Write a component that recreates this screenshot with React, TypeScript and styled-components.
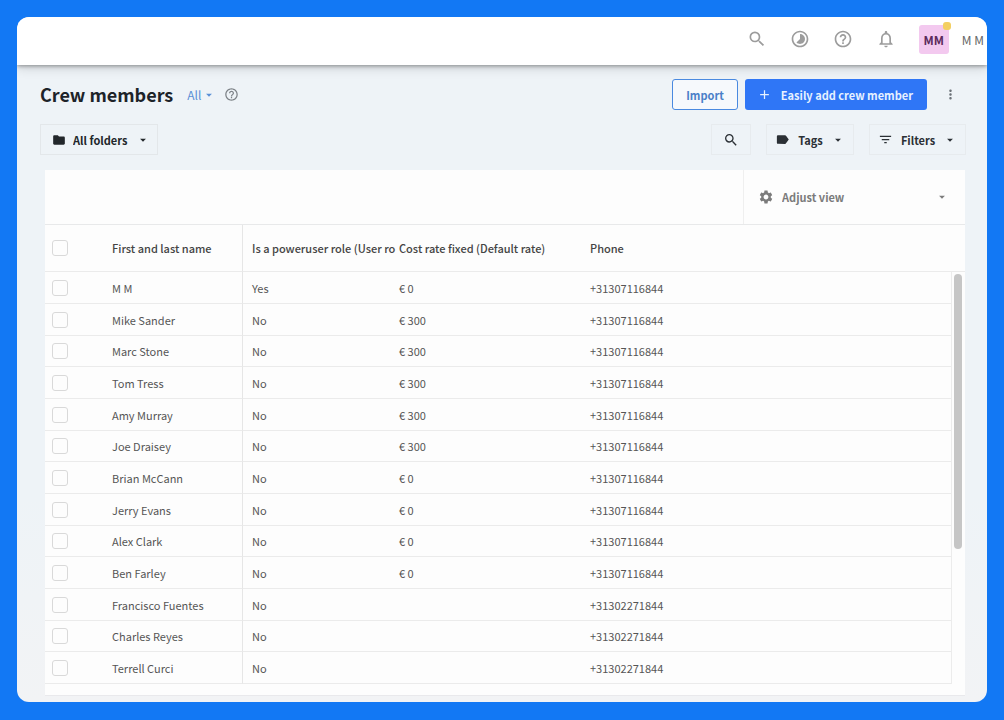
import React from "react";
import styled, { createGlobalStyle } from "styled-components";
import {
  MdAdd,
  MdArrowDropDown,
  MdFilterList,
  MdFolder,
  MdHelpOutline,
  MdLabel,
  MdMoreVert,
  MdNotificationsNone,
  MdSearch,
  MdSettings,
  MdTimelapse,
} from "react-icons/md";

const GlobalStyle = createGlobalStyle`
  * { box-sizing: border-box; }
  body { margin: 0; background: #1278f4; }
  body, button, select, input {
    font-family: "Noto Sans CJK SC", "Noto Sans", sans-serif;
  }
`;

const Backdrop = styled.div`
  display: flex;
  min-height: 100vh;
  padding: 17px 17px 18px;
  background: #1278f4;
`;

const Window = styled.div`
  flex: 1;
  min-width: 0;
  display: flex;
  flex-direction: column;
  overflow: hidden;
  border-radius: 12px;
  background: linear-gradient(#eef3f7 70%, #f2f3f5);
`;

const TopBar = styled.header`
  display: flex;
  align-items: center;
  justify-content: flex-end;
  height: 48px;
  padding: 0 3px 4px 0;
  background: #fff;
  box-shadow: 0 1px 4px rgba(0, 0, 0, 0.38), 0 4px 10px rgba(0, 0, 0, 0.12);
`;

const TopActions = styled.nav`
  display: flex;
  gap: 23px;
  margin: 0 23px 0 0;
`;

const IconButton = styled.button<{ $size: number; $color: string }>`
  display: flex;
  align-items: center;
  justify-content: center;
  width: ${(p) => p.$size}px;
  height: ${(p) => p.$size}px;
  padding: 0;
  border: 0;
  background: none;
  color: ${(p) => p.$color};
`;

const Avatar = styled.div`
  position: relative;
  width: 30px;
  height: 29px;
  border-radius: 3px;
  background: #f3c9ef;
  color: #5c2a5c;
  font-size: 12px;
  font-weight: 700;
  line-height: 29px;
  text-align: center;
`;

const StatusDot = styled.span`
  position: absolute;
  top: -3px;
  right: -2px;
  width: 8px;
  height: 8px;
  border-radius: 3px;
  background: #f3cf62;
`;

const UserName = styled.span`
  margin-left: 13px;
  color: #666;
  font-size: 12px;
  white-space: nowrap;
`;

const Page = styled.main`
  flex: 1;
  display: flex;
  flex-direction: column;
  padding: 14px 21px 6px 23px;
`;

const Bar = styled.div`
  display: flex;
  align-items: center;
  height: 31px;
  margin-bottom: 14px;
`;

const Title = styled.h1`
  margin: 0 14px 0 0;
  color: #1d2329;
  font-size: 18px;
  font-weight: 700;
  line-height: 31px;
  white-space: nowrap;
`;

const Spacer = styled.div`
  flex: 1;
`;

const Picker = styled.label<{ $color: string }>`
  display: grid;
  grid-template-columns: auto 1fr auto;
  align-items: center;
  color: ${(p) => p.$color};

  > svg {
    grid-row: 1;
    pointer-events: none;
  }
  > svg:first-child {
    grid-column: 1;
  }
  > svg:last-child {
    grid-column: 3;
  }
`;

const Select = styled.select<{ $size: number; $weight: number }>`
  grid-row: 1;
  grid-column: 2;
  min-width: 0;
  padding: 0;
  border: 0;
  appearance: none;
  background: none;
  color: inherit;
  font-size: ${(p) => p.$size}px;
  font-weight: ${(p) => p.$weight};
  line-height: 20px;
`;

const ScopePicker = styled(Picker)`
  margin-right: 8px;
`;

const FolderPicker = styled(Picker)`
  width: 118px;
  height: 31px;
  padding: 0 7px 0 11px;
  border: 1px solid #e3e7ea;
  column-gap: 7px;
`;

const ViewPicker = styled(Picker)`
  width: 222px;
  height: 54px;
  padding: 0 16px 0 14px;
  border-left: 1px solid #efefef;
  column-gap: 8px;
`;

const ImportButton = styled.button`
  height: 31px;
  width: 66px;
  margin-right: 7px;
  padding: 0;
  border: 1px solid #4a8ae0;
  border-radius: 3px;
  background: #f6f9fc;
  color: #4a80c8;
  font-size: 11px;
  font-weight: 700;
`;

const AddButton = styled.button`
  display: flex;
  align-items: center;
  justify-content: space-between;
  width: 182px;
  height: 31px;
  margin-right: 8px;
  padding: 0 14px 0 12px;
  border: 0;
  border-radius: 3px;
  background: #2f76f6;
  color: #e6f1ff;
  font-size: 11px;
  font-weight: 700;
  white-space: nowrap;
`;

const FilterButton = styled.button<{ $width: number }>`
  display: flex;
  align-items: center;
  justify-content: center;
  gap: 8px;
  width: ${(p) => p.$width}px;
  height: 31px;
  padding: 0;
  border: 1px solid #e7ebee;
  background: none;
  color: #2b3035;
  font-size: 11px;
  font-weight: 700;
`;

const FilterGroup = styled.div`
  display: flex;
  gap: 15px;
`;

const Card = styled.section`
  flex: 1;
  display: flex;
  flex-direction: column;
  margin: 1px 1px 0 5px;
  background: #fdfdfd;
`;

const CardToolbar = styled.div`
  display: flex;
  justify-content: flex-end;
  height: 55px;
  border-bottom: 1px solid #e8e9ea;
`;

const GridArea = styled.div`
  display: flex;
`;

const TableWrap = styled.div`
  flex: 1;
  min-width: 0;
`;

const Table = styled.table`
  width: 100%;
  table-layout: fixed;
  border-spacing: 0;
  color: #555;
  font-size: 11px;
  line-height: 16px;
  text-align: left;
`;

const Column = styled.col<{ $width?: number }>`
  width: ${(p) => (p.$width ? `${p.$width}px` : "auto")};
`;

const Row = styled.tr`
  height: 32px;

  &:nth-child(3n) {
    height: 31px;
  }
`;

const HeadRow = styled.tr`
  height: 47px;
`;

const Cell = styled.td<{ $divider?: boolean }>`
  padding: 0 0 0 9px;
  border-right: ${(p) => (p.$divider ? "1px solid #e6e6e6" : "0")};
  border-bottom: 1px solid #ebebeb;
  white-space: nowrap;
`;

const HeadCell = styled(Cell)`
  color: #444;
  font-weight: 500;
`;

const Checkbox = styled.input`
  display: block;
  width: 16px;
  height: 16px;
  margin: 0 0 0 -2px;
  border: 1px solid #d9d9d9;
  border-radius: 3px;
  appearance: none;
  background: #fdfdfd;
`;

const ScrollColumn = styled.div`
  display: flex;
  flex-direction: column;
  width: 14px;
`;

const ScrollCap = styled.div`
  height: 47px;
  border-bottom: 1px solid #ebebeb;
`;

const ScrollTrack = styled.div`
  flex: 1;
  padding: 2px 3px 0 2px;
  border-left: 1px solid #ececec;
`;

const ScrollThumb = styled.div`
  height: 67%;
  border-radius: 4px;
  background: #c6c6c6;
`;

const CardFoot = styled.div`
  flex: 1;
  border-bottom: 1px solid #e9e9ec;
`;

const people: [string, string, string, string][] = [
  ["M M", "Yes", "€ 0", "+31307116844"],
  ["Mike Sander", "No", "€ 300", "+31307116844"],
  ["Marc Stone", "No", "€ 300", "+31307116844"],
  ["Tom Tress", "No", "€ 300", "+31307116844"],
  ["Amy Murray", "No", "€ 300", "+31307116844"],
  ["Joe Draisey", "No", "€ 300", "+31307116844"],
  ["Brian McCann", "No", "€ 0", "+31307116844"],
  ["Jerry Evans", "No", "€ 0", "+31307116844"],
  ["Alex Clark", "No", "€ 0", "+31307116844"],
  ["Ben Farley", "No", "€ 0", "+31307116844"],
  ["Francisco Fuentes", "No", "", "+31302271844"],
  ["Charles Reyes", "No", "", "+31302271844"],
  ["Terrell Curci", "No", "", "+31302271844"],
];

export default function App() {
  return (
    <Backdrop>
      <GlobalStyle />
      <Window>
        <TopBar>
          <TopActions aria-label="Account tools">
            <IconButton $size={20} $color="#9c9c9c" aria-label="Search">
              <MdSearch size={22} />
            </IconButton>
            <IconButton $size={20} $color="#9c9c9c" aria-label="Time">
              <MdTimelapse size={22} />
            </IconButton>
            <IconButton $size={20} $color="#9c9c9c" aria-label="Help">
              <MdHelpOutline size={22} />
            </IconButton>
            <IconButton $size={20} $color="#9c9c9c" aria-label="Notifications">
              <MdNotificationsNone size={20} />
            </IconButton>
          </TopActions>
          <Avatar>
            MM
            <StatusDot />
          </Avatar>
          <UserName>M M</UserName>
        </TopBar>
        <Page>
          <Bar>
            <Title>Crew members</Title>
            <ScopePicker $color="#5a8fd6">
              <Select $size={12} $weight={400} aria-label="Scope">
                <option>All</option>
              </Select>
              <MdArrowDropDown size={14} />
            </ScopePicker>
            <IconButton $size={15} $color="#7d8287" aria-label="About crew members">
              <MdHelpOutline size={15} />
            </IconButton>
            <Spacer />
            <ImportButton>Import</ImportButton>
            <AddButton>
              <MdAdd size={15} />
              Easily add crew member
            </AddButton>
            <IconButton $size={31} $color="#6c7278" aria-label="More">
              <MdMoreVert size={15} />
            </IconButton>
          </Bar>
          <Bar>
            <FolderPicker $color="#22272b">
              <MdFolder size={14} />
              <Select $size={11} $weight={700} aria-label="Folder">
                <option>All folders</option>
              </Select>
              <MdArrowDropDown size={14} />
            </FolderPicker>
            <Spacer />
            <FilterGroup>
              <FilterButton $width={40} aria-label="Search crew members">
                <MdSearch size={16} />
              </FilterButton>
              <FilterButton $width={88}>
                <MdLabel size={15} />
                Tags
                <MdArrowDropDown size={14} />
              </FilterButton>
              <FilterButton $width={97}>
                <MdFilterList size={15} />
                Filters
                <MdArrowDropDown size={14} />
              </FilterButton>
            </FilterGroup>
          </Bar>
          <Card>
            <CardToolbar>
              <ViewPicker $color="#7b7b7b">
                <MdSettings size={16} />
                <Select $size={11} $weight={700} aria-label="View">
                  <option>Adjust view</option>
                </Select>
                <MdArrowDropDown size={14} />
              </ViewPicker>
            </CardToolbar>
            <GridArea>
              <TableWrap>
                <Table>
                  <colgroup>
                    <Column $width={58} />
                    <Column $width={140} />
                    <Column $width={147} />
                    <Column $width={191} />
                    <Column />
                  </colgroup>
                  <thead>
                    <HeadRow>
                      <HeadCell as="th">
                        <Checkbox type="checkbox" aria-label="Select all" />
                      </HeadCell>
                      <HeadCell as="th" $divider>First and last name</HeadCell>
                      <HeadCell as="th">Is a poweruser role (User ro</HeadCell>
                      <HeadCell as="th">Cost rate fixed (Default rate)</HeadCell>
                      <HeadCell as="th">Phone</HeadCell>
                    </HeadRow>
                  </thead>
                  <tbody>
                    {people.map(([name, power, rate, phone]) => (
                      <Row key={name}>
                        <Cell>
                          <Checkbox type="checkbox" aria-label={`Select ${name}`} />
                        </Cell>
                        <Cell $divider>{name}</Cell>
                        <Cell>{power}</Cell>
                        <Cell>{rate}</Cell>
                        <Cell>{phone}</Cell>
                      </Row>
                    ))}
                  </tbody>
                </Table>
              </TableWrap>
              <ScrollColumn>
                <ScrollCap />
                <ScrollTrack>
                  <ScrollThumb />
                </ScrollTrack>
              </ScrollColumn>
            </GridArea>
            <CardFoot />
          </Card>
        </Page>
      </Window>
    </Backdrop>
  );
}
